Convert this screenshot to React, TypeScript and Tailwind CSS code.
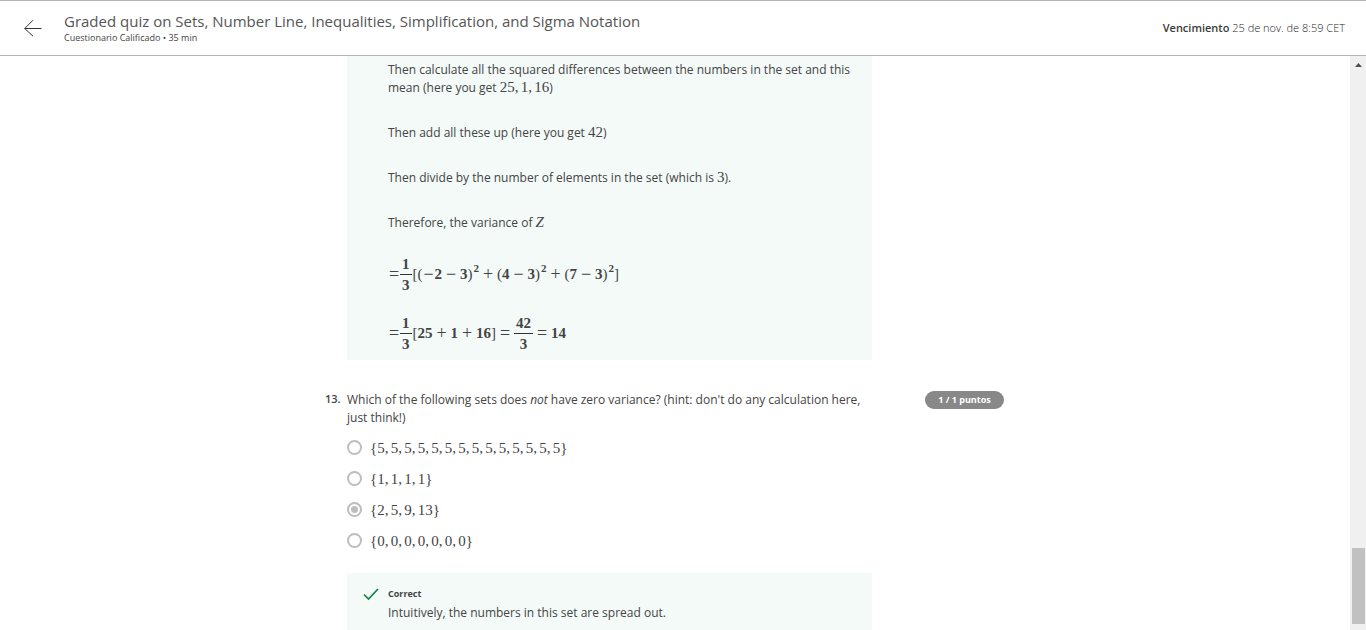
import { Fragment, type ReactNode } from "react";

function NumberList({ values }: { values: string[] }) {
  return (
    <span className="font-['Liberation_Serif',serif] text-[15px] leading-4 text-[#444444]">
      {values.map((value, i) => (
        <Fragment key={i}>
          {value}
          {i < values.length - 1 && <span className="inline-block w-[6px]">,</span>}
        </Fragment>
      ))}
    </span>
  );
}

function Op({ children }: { children: ReactNode }) {
  return <span className="mx-1 w-[10px] text-center text-lg leading-4 font-normal">{children}</span>;
}

function Frac({ top, bottom }: { top: string; bottom: string }) {
  return (
    <span className="flex flex-col text-center leading-4">
      <span className="border-b border-[#333333] px-[2px] pb-[2px]">{top}</span>
      <span className="pt-[2px]">{bottom}</span>
    </span>
  );
}

function Bracket({ children }: { children: ReactNode }) {
  return <span className="font-normal">{children}</span>;
}

function Square({ a, b, negative = false }: { a: string; b: string; negative?: boolean }) {
  return (
    <span className="flex items-center">
      <Bracket>(</Bracket>
      {negative && <span className="w-3 text-center text-lg leading-4 font-normal">−</span>}
      <span>{a}</span>
      <Op>−</Op>
      <span>{b}</span>
      <Bracket>)</Bracket>
      <sup className="top-0 -mt-[2px] ml-px self-start text-[11px] leading-[8px]">2</sup>
    </span>
  );
}

function Formula({ children }: { children: ReactNode }) {
  return (
    <div className="flex h-8 items-center font-['Liberation_Serif',serif] text-[15px] leading-4 font-bold text-[#444444]">
      <span className="w-3 text-center text-lg leading-4 font-normal">=</span>
      <Frac top="1" bottom="3" />
      <span className="w-px" />
      {children}
    </div>
  );
}

const options = [
  Array<string>(14).fill("5"),
  Array<string>(4).fill("1"),
  ["2", "5", "9", "13"],
  Array<string>(7).fill("0"),
];

export default function App() {
  return (
    <div className="flex min-h-screen flex-col bg-white font-['Open_Sans',sans-serif] text-xs leading-[18px] text-[#444444]">
      <header className="flex h-14 items-center border-y border-[#b5b5b5] pr-[21px] pl-6">
        <button type="button" aria-label="Back" className="mr-[22px]">
          <svg width="18" height="18" viewBox="0 0 18 18" fill="none" stroke="#333" strokeWidth="1">
            <path d="M17.5 9.5H.7M9 1.2.7 9.5 9 17.2" />
          </svg>
        </button>
        <div className="flex-1 pb-[2px]">
          <h1 className="text-[15px] leading-[22px] text-[#555555]">
            Graded quiz on Sets, Number Line, Inequalities, Simplification, and Sigma Notation
          </h1>
          <p className="text-[9px] leading-3">Cuestionario Calificado • 35 min</p>
        </div>
        <p className="text-[11px] font-light text-[#1f1f1f]">
          <strong className="font-semibold text-[#3a3a3a]">Vencimiento</strong> 25 de nov. de 8:59 CET
        </p>
      </header>

      <div className="flex flex-1">
        <main className="flex-1">
          <div className="mx-auto max-w-[700px]">
            <section className="ml-[22px] max-w-[525px] bg-[#f3faf8] pt-[5px] pr-4 pb-[11px] pl-[41px]">
              <div className="flex flex-col gap-[27px]">
                <p>
                  Then calculate all the squared differences between the numbers in the set and this mean (here you
                  get <NumberList values={["25", "1", "16"]} />)
                </p>
                <p>
                  Then add all these up (here you get <NumberList values={["42"]} />)
                </p>
                <p>
                  Then divide by the number of elements in the set (which is <NumberList values={["3"]} />
                  ).
                </p>
                <p>
                  Therefore, the variance of{" "}
                  <i className="font-['Liberation_Serif',serif] text-[15px] leading-4">Z</i>
                </p>
              </div>
              <div className="mt-[26px] flex flex-col gap-[27px]">
                <Formula>
                  <Bracket>[</Bracket>
                  <Square a="2" b="3" negative />
                  <Op>+</Op>
                  <Square a="4" b="3" />
                  <Op>+</Op>
                  <Square a="7" b="3" />
                  <Bracket>]</Bracket>
                </Formula>
                <Formula>
                  <Bracket>[</Bracket>
                  <span>25</span>
                  <Op>+</Op>
                  <span>1</span>
                  <Op>+</Op>
                  <span>16</span>
                  <Bracket>]</Bracket>
                  <Op>=</Op>
                  <Frac top="42" bottom="3" />
                  <Op>=</Op>
                  <span>14</span>
                </Formula>
              </div>
            </section>

            <section className="mt-[31px] flex items-start">
              <span className="w-[22px] shrink-0 text-[11px] leading-4 font-semibold">13.</span>
              <fieldset className="w-[525px]">
                <legend>
                  Which of the following sets does <em>not</em> have zero variance? (hint: don't do any calculation
                  here, just think!)
                </legend>
                <div className="mt-[5px] flex flex-col">
                  {options.map((values, i) => (
                    <label key={i} className="flex h-[31px] items-center gap-2">
                      <input
                        type="radio"
                        name="q13"
                        defaultChecked={i === 2}
                        className="size-[15px] appearance-none rounded-full border-2 border-[#bdbdbd] bg-white bg-clip-content p-[2px] checked:bg-[#bdbdbd]"
                      />
                      <span className="font-['Liberation_Serif',serif] text-[15px] leading-4 text-[#444444]">
                        {"{"}
                        <NumberList values={values} />
                        {"}"}
                      </span>
                    </label>
                  ))}
                </div>
              </fieldset>
              <span className="ml-[53px] w-[79px] shrink-0 rounded-full bg-[#888888] text-center text-[9px] leading-[18px] font-bold text-white">
                1 / 1 puntos
              </span>
            </section>

            <section className="mt-[17px] ml-[22px] flex max-w-[525px] bg-[#f3faf8] pt-3 pb-2 pl-4">
              <svg className="mt-[3px] mr-[9px]" width="16" height="13" viewBox="0 0 16 13" fill="none" stroke="#14804a" strokeWidth="1.7">
                <path d="M1 6.5 5.5 11 15 1" />
              </svg>
              <div>
                <h2 className="text-[9px] leading-[18px] font-bold">Correct</h2>
                <p className="pt-px">Intuitively, the numbers in this set are spread out.</p>
              </div>
            </section>
          </div>
        </main>

        <div aria-hidden="true" className="flex w-4 flex-col items-center justify-between bg-[#f0f0f0] pt-[7px] pb-[6px]">
          <svg width="7" height="4" viewBox="0 0 7 4" fill="#505050">
            <path d="M0 4 3.5 0 7 4Z" />
          </svg>
          <div className="h-[76px] w-[13px] bg-[#c1c1c1]" />
        </div>
      </div>
    </div>
  );
}
